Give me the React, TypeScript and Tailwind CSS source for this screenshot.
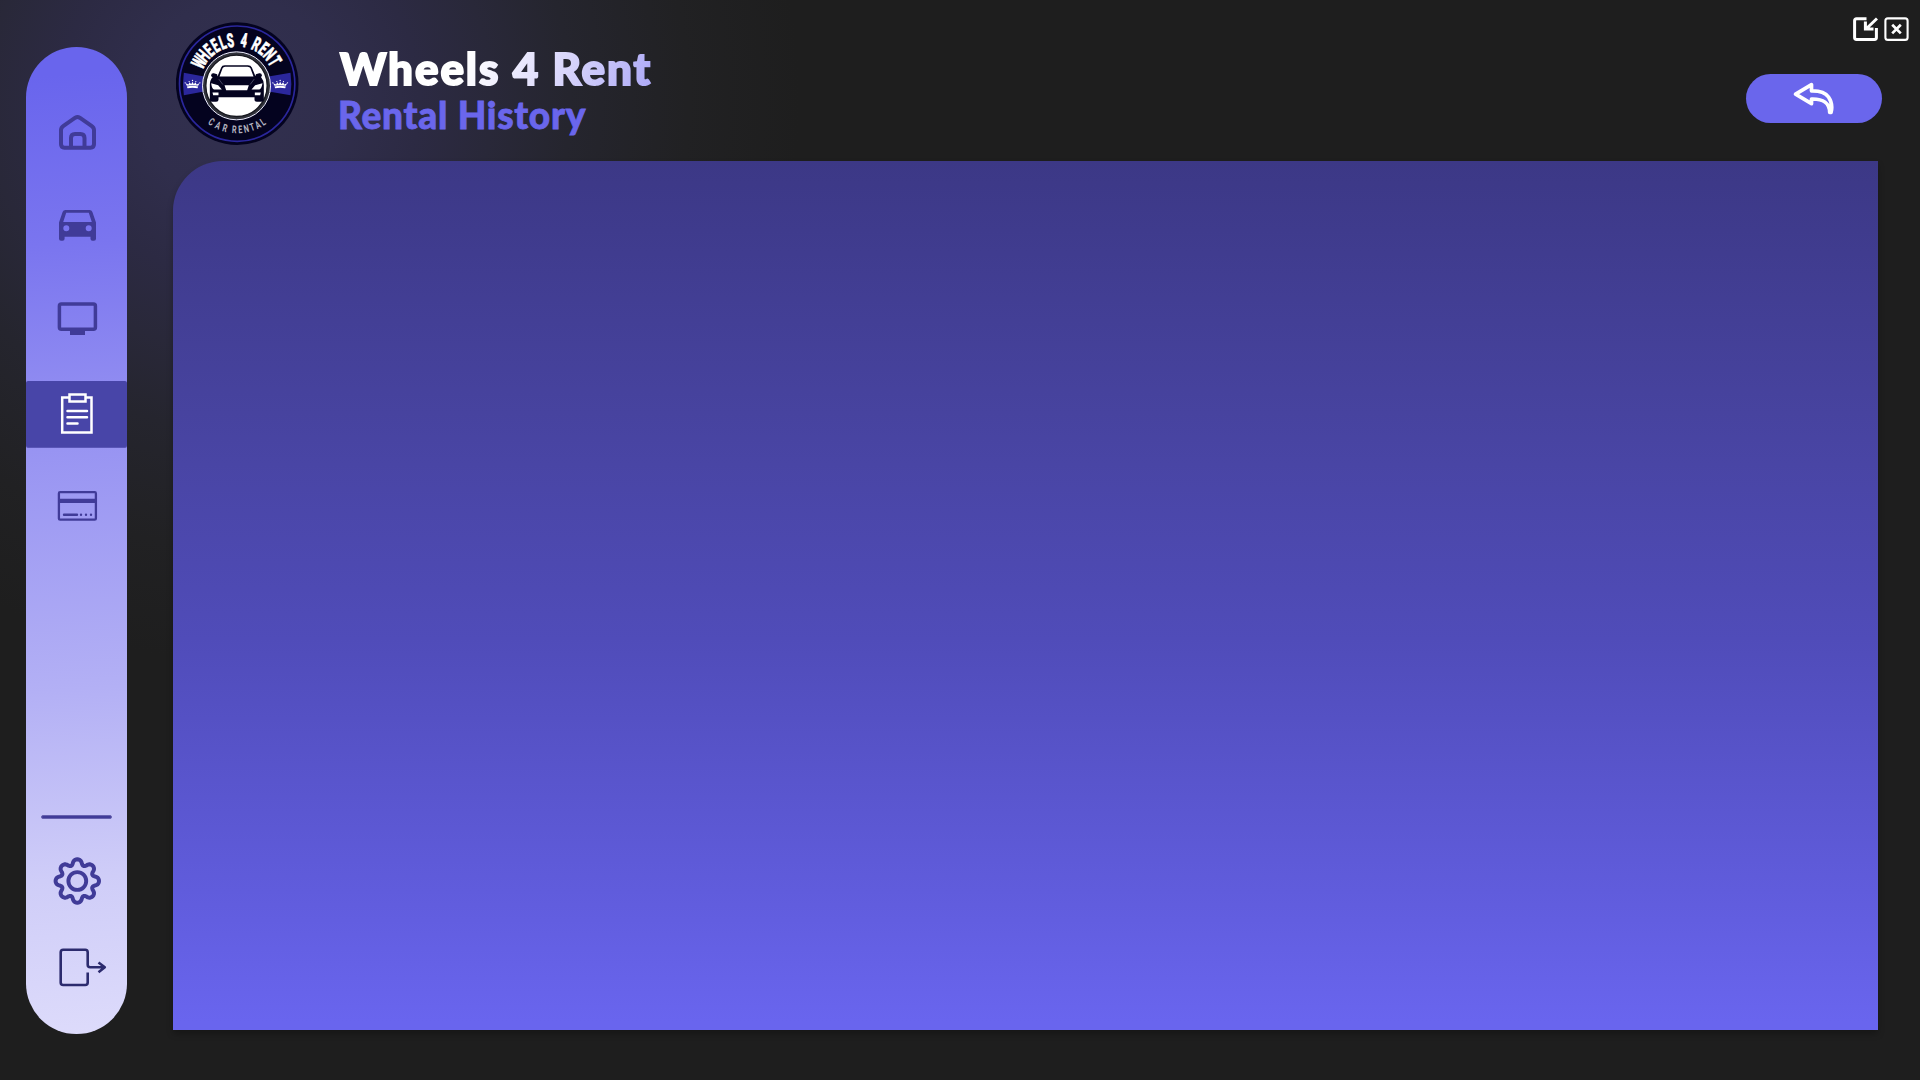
import type { ReactNode } from 'react';

const INK = '#403b98';

function arcLetters(text: string, from: number, to: number) {
  const step = text.length > 1 ? (to - from) / (text.length - 1) : 0;
  return text.split('').map((ch, i) => ({ ch, angle: from + i * step }));
}

const topLetters = [...arcLetters('WHEELS', -61, -9), ...arcLetters('4', 9, 9), ...arcLetters('RENT', 26, 59)];
const bottomLetters = [...arcLetters('CAR', 34, 15.5), ...arcLetters('RENTAL', 3.5, -34)];

function Crown({ x }: { x: number }) {
  return (
    <g transform={`translate(${x} 207)`} fill="#fff">
      <path d="M-17 6 L-21 -2 L-12 2 L-9 -5 L-4 1 L0 -6 L4 1 L9 -5 L12 2 L21 -2 L17 6 Q0 2 -17 6Z" />
      <path d="M-17 8 Q0 4 17 8 L15 13 Q0 11 -15 13Z" />
      <circle cx="-22" cy="-3" r="2" />
      <circle cx="-10" cy="-7" r="1.800" />
      <circle cx="0" cy="-10" r="2" />
      <circle cx="10" cy="-7" r="1.800" />
      <circle cx="22" cy="-3" r="2" />
    </g>
  );
}

function Logo() {
  return (
    <svg className="h-[123px] w-[123px] shrink-0" viewBox="33.5 21.5 369 369">
      <circle cx="217" cy="206.500" r="184" fill="#04031f" />
      <circle cx="217" cy="206.500" r="173" fill="none" stroke="#2b279c" strokeWidth="5" />
      <path d="M57 174 L118 185 V230 L57 241 Q52 207 57 174Z" fill="#2b279c" />
      <path d="M377 174 L311 185 V230 L377 241 Q382 207 377 174Z" fill="#2b279c" />
      <Crown x={83} />
      <Crown x={346} />
      <circle cx="215" cy="213" r="102" fill="#30323a" stroke="#eef" strokeWidth="3" />
      <circle cx="215" cy="213" r="92" fill="#fff" stroke="#17181f" strokeWidth="4" />
      <g fill="#04031f">
        <path d="M160 180 L169 158 Q171 151 180 151 H249 Q258 151 261 158 L270 180 L275 186 H288 Q297 197 297 210 V255 Q297 261 290 261 H276 Q269 261 269 255 V247 H161 V255 Q161 261 154 261 H141 Q135 261 135 255 V209 Q135 195 145 186 H156Z" />
        <path d="M139 181 Q139 174 147 175 L157 178 V188 H146 Q139 188 139 181Z" />
        <path d="M291 181 Q291 174 283 175 L273 178 V188 H284 Q291 188 291 181Z" />
      </g>
      <path d="M164 185 L173 161 Q175 156 181 156 H248 Q255 156 257 161 L266 185Z" fill="#fff" />
      <path d="M139 205 L160 211 L171 224 H148 Q141 222 139 205Z M293 205 L271 211 L260 224 H283 Q290 222 293 205Z M179 211 H252 L247 226 H184Z M143 233 H161 V241 H145Z M270 233 H288 L286 241 H270Z" fill="#fff" />
      <path d="M162 193 L174 209 M268 193 L256 209" stroke="#666a80" strokeWidth="2" />
      {topLetters.map(({ ch, angle }, i) => (
        <text
          key={i}
          transform={`translate(217 206.500) rotate(${angle}) translate(0 -111) scale(.56 1)`}
          textAnchor="middle"
          stroke="#fff"
          strokeWidth="1.500"
          className="fill-white font-['Roboto'] text-[59px] font-black"
        >
          {ch}
        </text>
      ))}
      {bottomLetters.map(({ ch, angle }, i) => (
        <text
          key={i}
          transform={`translate(217 206.500) rotate(${angle}) translate(0 149) scale(.68 1)`}
          textAnchor="middle"
          className="fill-[#b4b4c0] font-['Roboto'] text-[32px] font-bold"
        >
          {ch}
        </text>
      ))}
    </svg>
  );
}

function NavItem({ label, active, children }: { label: string; active?: boolean; children: ReactNode }) {
  return (
    <button
      aria-label={label}
      className={active ? 'h-[66px] w-[101px] rounded-[2px] bg-[#4845a8] shadow-[0_1px_0_#5a56b8]' : 'h-[66px] w-[101px]'}
    >
      <svg className="block h-[66px] w-[101px]" viewBox="0 0 101 66" fill="none" strokeLinejoin="round" strokeLinecap="round">
        {children}
      </svg>
    </button>
  );
}

const gearPath =
  Array.from({ length: 144 }, (_, i) => {
    const t = (i / 144) * Math.PI * 2;
    const r = 19 + 2.7 * Math.cos(8 * t);
    // Shifting the angle against the lobes widens their heads and narrows their necks.
    const a = t + 0.03 * Math.sin(8 * t) + 0.02 * Math.sin(16 * t);
    return `${i ? 'L' : 'M'}${(51.3 + r * Math.sin(a)).toFixed(2)} ${(33 - r * Math.cos(a)).toFixed(2)}`;
  }).join('') + 'Z';

function Sidebar() {
  return (
    <nav className="mt-[47px] ml-[26px] flex h-[987px] w-[101px] shrink-0 flex-col items-center rounded-[50.5px] bg-[linear-gradient(176deg,#6965ed_3%,#7a75ef_20%,#9692f2_39%,#b3b0f5_65%,#cfcdf8_84%,#dddbfb_100%)] pt-[52px]">
      <div className="flex flex-col gap-7">
        <NavItem label="Home">
          <path
            d="M37.500 26.800 L49.300 18.700 Q51.500 17.300 53.700 18.700 L65.500 26.800 Q68 28.500 68 31 V45 Q68 48.700 64.500 48.700 H38.500 Q35 48.700 35 45 V31 Q35 28.500 37.500 26.800Z M45 48.500 V39 Q45 35 49 35 H54.500 Q58.500 35 58.500 39 V48.500"
            stroke={INK}
            strokeWidth="4"
            strokeLinecap="butt"
          />
        </NavItem>
        <NavItem label="Cars">
          <path
            fillRule="evenodd"
            fill={INK}
            d="M39.500 17 H63.500 Q65.700 17 66.400 19 L70 29.500 V45.700 Q70 47.700 68 47.700 H66.500 Q64.500 47.700 64.500 45.700 V43.700 H38.600 V45.700 Q38.600 47.700 36.600 47.700 H35 Q33 47.700 33 45.700 V29.500 L36.600 19 Q37.300 17 39.500 17Z M40.200 19.800 L37.200 29 H65.800 L62.800 19.800Z M37.300 35.200 a3 3 0 1 0 6 0 a3 3 0 1 0 -6 0Z M59.700 35.200 a3 3 0 1 0 6 0 a3 3 0 1 0 -6 0Z"
          />
        </NavItem>
        <NavItem label="Display">
          <rect x="33.400" y="17" width="36" height="25.300" rx="2" stroke={INK} strokeWidth="3.500" />
          <path d="M44 43 H59 V48 H44Z" fill={INK} />
        </NavItem>
        <NavItem label="Rental history" active>
          <g stroke="#fff" strokeWidth="2.500" strokeLinejoin="miter">
            <path d="M43 16.500 H36.200 V51.500 H65.500 V16.500 H60" strokeLinecap="butt" />
            <rect x="43.500" y="13.500" width="16" height="7" />
            <path d="M41.500 30 H61 M41.500 36.200 H61 M41.500 42.600 H51.500" />
          </g>
        </NavItem>
        <NavItem label="Payments">
          <rect x="32.900" y="17.200" width="37" height="27.500" rx="1.200" stroke={INK} strokeWidth="2.300" />
          <path d="M32.500 23.700 H70.500 V28 H32.500Z" fill={INK} />
          <path d="M38 39.700 H51 M55 39.700 h.01 M60 39.700 h.01 M65 39.700 h.01" stroke={INK} strokeWidth="2.400" />
        </NavItem>
      </div>
      <div className="mt-[274px] h-1 w-[71px] rounded-full border border-[#6661b0] bg-[#403b98]" />
      <div className="mt-[29px] flex flex-col gap-5">
        <NavItem label="Settings">
          <path d={gearPath} stroke={INK} strokeWidth="4" />
          <circle cx="51.300" cy="33" r="8.900" stroke={INK} strokeWidth="3.900" />
        </NavItem>
        <NavItem label="Log out">
          <path
            d="M61.700 38.500 V48.500 Q61.700 51 59.200 51 H37.200 Q34.700 51 34.700 48.500 V18.200 Q34.700 15.700 37.200 15.700 H59.200 Q61.700 15.700 61.700 18.200 V30.800 Q61.700 33.300 64.200 33.300 H78.500 M72.500 28.500 L78.800 33.300 L72.500 38.300"
            stroke="#2c2b6e"
            strokeWidth="2.600"
            strokeLinecap="butt"
          />
        </NavItem>
      </div>
    </nav>
  );
}

function WindowControls() {
  return (
    <div className="mt-[17px] mr-[-27px] flex h-6 gap-[6px] self-end">
      <svg className="h-6 w-[25px]" viewBox="0 0 25 24" fill="none" stroke="#fff" strokeWidth="3">
        <path d="M13.500 1.800 H3.500 Q1.600 1.800 1.600 3.700 V20.500 Q1.600 22.400 3.500 22.400 H21.500 Q23.400 22.400 23.400 20.500 V11" />
        <path d="M24 1.500 L13 12 M12.400 4.500 V12 H20.500" />
      </svg>
      <svg className="h-6 w-[25px]" viewBox="0 0 25 24" fill="none" stroke="#fff" strokeWidth="2.100">
        <rect x="1.400" y="1.400" width="22.200" height="21.500" rx="2.500" />
        <path d="M8.200 7.800 L16.800 16.400 M16.800 7.800 L8.200 16.400" strokeWidth="2.700" />
      </svg>
    </div>
  );
}

export default function App() {
  return (
    <div className="flex h-[1080px] w-[1920px] overflow-hidden bg-[#1e1e1e] bg-[radial-gradient(circle_560px_at_240px_100px,#32304f_0%,#302e4c_18%,#2c2a43_32%,#292839_45%,#25252e_59%,#212123_80%,#1e1e1e_100%)]">
      <Sidebar />
      <div className="ml-[46px] flex w-[1709px] flex-col">
        <header className="flex h-[161px] justify-between">
          <div className="flex pt-[22px] pl-[3px]">
            <Logo />
            <div className="ml-[38px] pt-[22px] font-['Lato',sans-serif] whitespace-nowrap">
              <h1 className="w-[320px] bg-[linear-gradient(110deg,#fff_40%,#d9d6fb_70%,#aaa6f6_100%)] bg-clip-text pl-[3px] text-[44px] leading-[48px] font-black tracking-[1.9px] text-transparent [-webkit-text-stroke:2px_transparent]">
                Wheels 4 Rent
              </h1>
              <h2 className="mt-px pl-[1px] text-[37px] leading-[44px] font-black tracking-[0.75px] text-[#6a66ec] [-webkit-text-stroke:0.8px_#6a66ec]">
                Rental History
              </h2>
            </div>
          </div>
          <div className="flex flex-col">
            <WindowControls />
            <button aria-label="Back" className="mt-[33px] flex h-[49px] w-[136px] justify-center rounded-full bg-[#6a66ec]">
              <svg className="mt-[7px] h-[36px] w-[42px]" viewBox="0 0 42 36" fill="none" stroke="#fff" strokeWidth="3.700" strokeLinejoin="round">
                <path d="M2.600 13.200 L18.500 3.700 V9.800 Q31 9.500 35.500 16 Q40.300 23 38 31.500 H36.700 Q36.500 17.500 18.500 18 V22.700Z" />
              </svg>
            </button>
          </div>
        </header>
        <main className="h-[869px] w-[1705px] rounded-tl-[50px] bg-[linear-gradient(180deg,#3c3886_0%,#47439f_29%,#504cb9_55%,#605cdc_84%,#6965ee_99%)] shadow-[0_4px_6px_rgba(0,0,0,0.25)]" />
      </div>
    </div>
  );
}
